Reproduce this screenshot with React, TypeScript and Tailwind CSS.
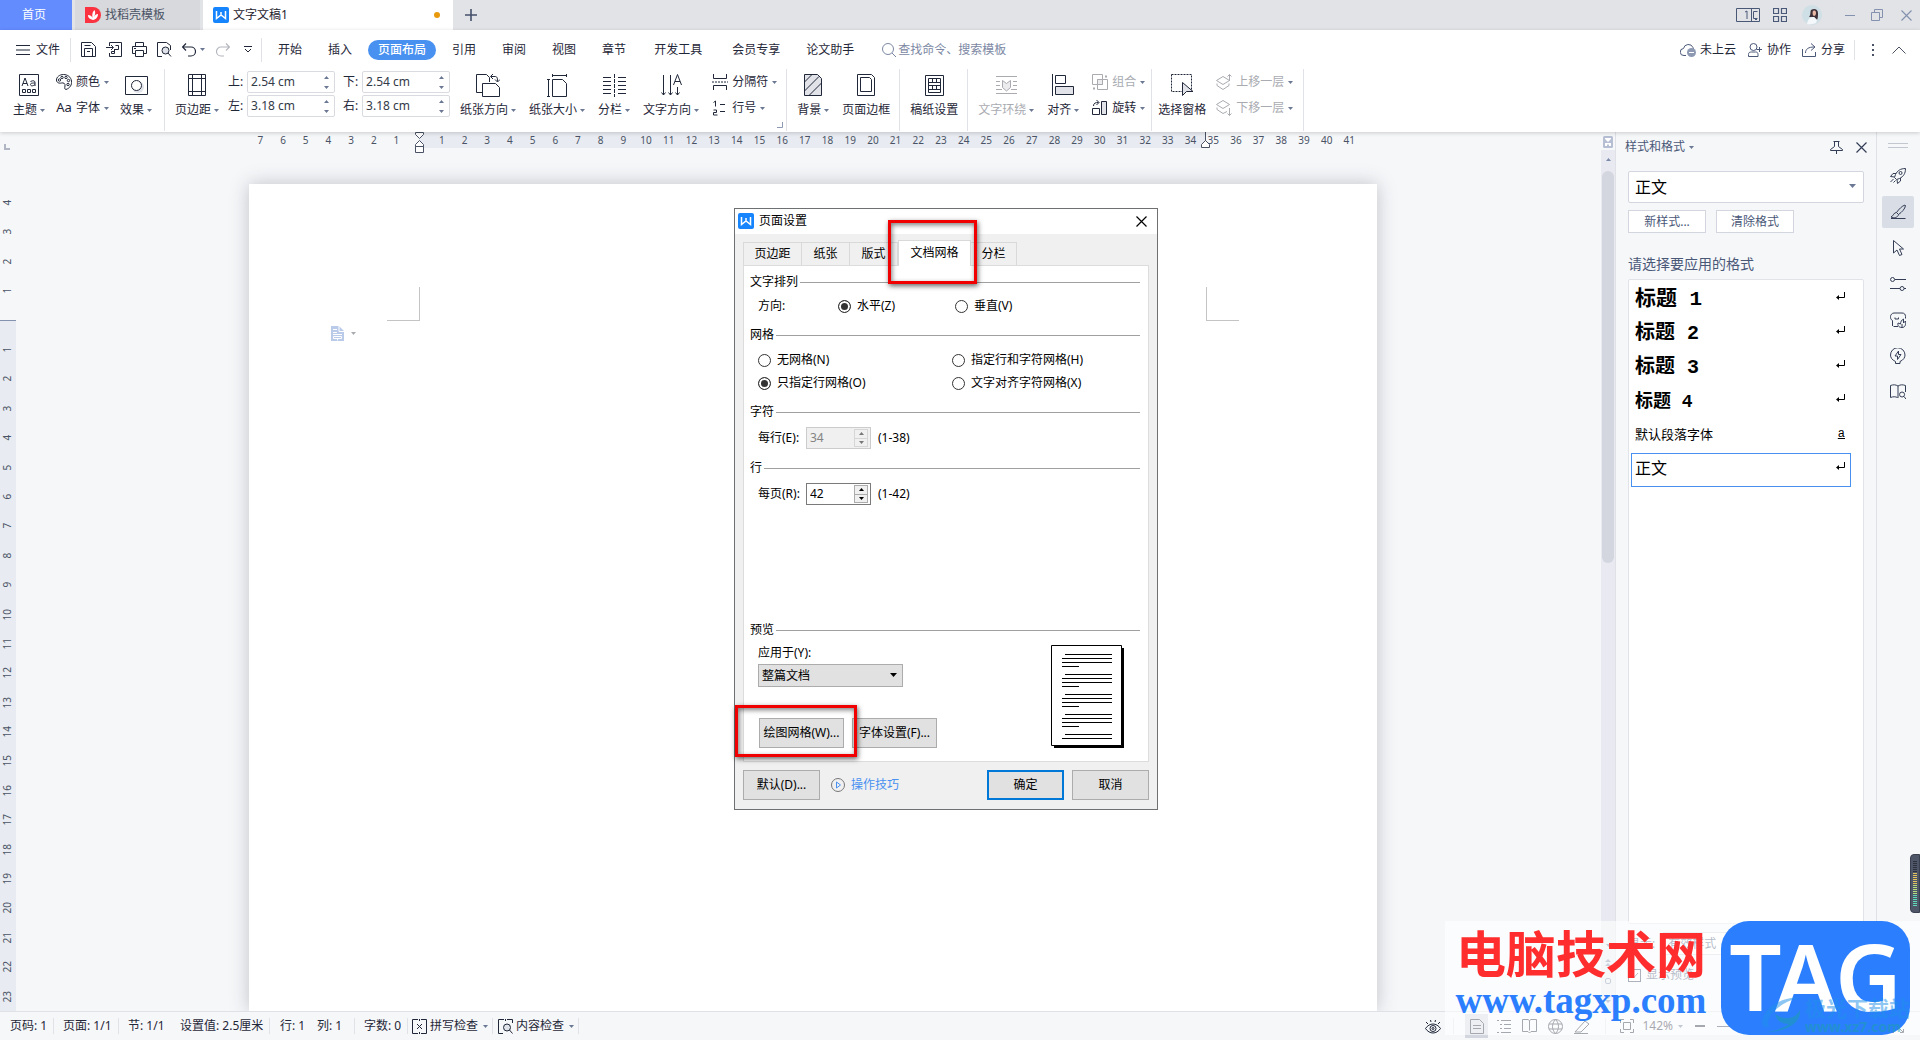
import React, { useState } from 'react';

interface IconProps {
  w: number;
  h: number;
  className?: string;
  children: React.ReactNode;
}

const Icon: React.FC<IconProps> = ({ w, h, className = '', children }) => (
  <svg
    width={w}
    height={h}
    viewBox={`0 0 ${w} ${h}`}
    fill="none"
    stroke="currentColor"
    aria-hidden="true"
    className={`shrink-0 ${className}`}
  >
    {children}
  </svg>
);

const Caret: React.FC<{ className?: string }> = ({ className = 'text-[#6b7894]' }) => (
  <Icon w={5} h={3} className={className}>
    <path d="M0 0h5L2.5 3z" fill="currentColor" stroke="none" />
  </Icon>
);

const CloseIcon: React.FC<{ className?: string }> = ({ className }) => (
  <Icon w={11} h={11} className={className}>
    <path d="M.5.5l10 10M10.5.5l-10 10" strokeWidth="1.2" />
  </Icon>
);

const WriterLogo = () => (
  <Icon w={16} h={16}>
    <rect width="16" height="16" rx="2" fill="#1684fc" stroke="none" />
    <path d="M3.500 4v7.500L8 8l4.500 3.500V4M8 8V5" stroke="#fff" strokeWidth="1.5" />
  </Icon>
);

const Separator: React.FC<{ className?: string }> = ({ className = '' }) => (
  <span className={`w-px shrink-0 bg-[#e0e2e7] ${className}`} />
);

/* ---------- Title bar ---------- */

const TitleBar = () => (
  <header className="flex h-[30px] shrink-0 items-stretch bg-[#e2e3e7]">
    <button className="w-[72px] bg-[#638cff] pr-1 text-white">首页</button>
    <button className="ml-[3px] flex w-[125px] items-center gap-1 bg-[#d8d9dc] pl-[10px] text-[#4a5365]">
      <Icon w={16} h={16}>
        <path d="M0 0h8a8 8 0 0 1 0 16H0z" fill="#fb3340" stroke="none" />
        <path d="M8 13c-4-1-5-3-5-5 2 0 4 1 4.500 3C7 8 7 5 9.500 3c1 2 1 4-.5 7 1-2 2-3 4-3 0 3-2 5.500-5 6z" fill="#fff" stroke="none" />
      </Icon>
      找稻壳模板
    </button>
    <button className="ml-[3px] flex w-[250px] items-center gap-1 bg-white pl-[10px] text-[#1f2430]">
      <WriterLogo />
      文字文稿1
      <span className="mr-[13px] ml-auto size-1.5 rounded-full bg-[#e89a0c]" />
    </button>
    <button aria-label="新建" className="ml-3 text-[#44506a]">
      <Icon w={12} h={12}>
        <path d="M6 0v12M0 6h12" strokeWidth="1.600" />
      </Icon>
    </button>
    <div className="ml-auto flex items-center pr-2 text-[#4a5878]">
      <Icon w={24} h={14}>
        <path d="M.5.5h23v13H.5zM15.500.5v13M9 4l2-1v8" />
        <path d="M21.500 3.500h-4v7h4M19 11.500h2" />
      </Icon>
      <Icon w={14} h={14} className="ml-[13px]">
        <path d="M.5.5h5v5h-5zM8.500.5h5v5h-5zM.5 8.500h5v5h-5zM8.500 8.500h5v5h-5z" strokeWidth="1.200" />
      </Icon>
      <Icon w={20} h={20} className="ml-[15px]">
        <circle cx="10" cy="10" r="10" fill="#cfdfe6" stroke="none" />
        <path d="M9 5c3-2 7-1 7 3 0 3 0 5-1 7l-3-3-5 0c2-2 1-5 2-7z" fill="#40323a" stroke="none" />
        <path d="M11 6c2-1 3 0 3 2s-1 3-2 3-2-3-1-5z" fill="#e9b9a5" stroke="none" />
        <path d="M5 19c1-6 4-7 7-7l3 3-1 3c-3 1.500-7 1.500-9 1z" fill="#f4f8fa" stroke="none" />
      </Icon>
      <Separator className="mr-2 ml-[10px] h-5 bg-[#c3c7d0]" />
      <div className="flex items-center text-[#8492b0]">
        <button aria-label="最小化" className="ml-1">
          <Icon w={10} h={10}><path d="M0 5.500h10" /></Icon>
        </button>
        <button aria-label="还原" className="ml-4">
          <Icon w={12} h={12}><path d="M.5 3.500h8v8h-8zM3.500 3V.5h8v8H9" /></Icon>
        </button>
        <button aria-label="关闭" className="ml-[18px]"><CloseIcon /></button>
      </div>
    </div>
  </header>
);

/* ---------- Menu ---------- */

const menus = [
  { name: '开始' },
  { name: '插入' },
  { name: '页面布局' },
  { name: '引用' },
  { name: '审阅' },
  { name: '视图' },
  { name: '章节' },
  { name: '开发工具', className: 'ml-0.5' },
  { name: '会员专享', className: 'ml-1' },
  { name: '论文助手' },
];

const MenuBar = () => {
  const [active, setActive] = useState('页面布局');

  return (
    <nav className="flex h-[39px] items-center pr-[14px] pl-4 text-[#1f2738]">
      <button className="flex items-center gap-1.5">
        <Icon w={14} h={10}><path d="M0 .5h14M0 5h14M0 9.500h14" /></Icon>
        文件
      </button>
      <Separator className="mx-[10px] h-6" />
      <div className="flex items-center gap-[10px]">
        <button aria-label="保存">
          <Icon w={15} h={15}><path d="M.5 14.500V.5h10l4 4v10zM3.500 14V6.500h8V14M3.500 3.500h6M6 9.500h3" /></Icon>
        </button>
        <button aria-label="输出为PDF">
          <Icon w={16} h={15}><path d="M3.500 4V.5h12v14h-12V11M0 5.500h7M5 3l2.500 2.500L5 8M9.500 3.500h3v4H8.500M8.500 7.500v2h-3v2h3V7" /></Icon>
        </button>
        <button aria-label="打印">
          <Icon w={15} h={15}><path d="M3.500 4V.5h8V4M3 11.500H.5v-7h14v7H12M3.500 8.500h8v6h-8zM2 6.500h2" /></Icon>
        </button>
        <button aria-label="打印预览">
          <Icon w={15} h={15}><path d="M5 14.500H.5V.5h9l4 3V8" /><circle cx="8.500" cy="8.500" r="3.500" fill="#dfe2e8" /><path d="M11 11l3 3.500" /></Icon>
        </button>
        <button aria-label="撤销">
          <Icon w={14} h={14}><path d="M4 .5L.5 4 4 7.500M.5 4H9a4.500 4.500 0 0 1 0 9H6" strokeWidth="1.200" /></Icon>
        </button>
      </div>
      <Caret className="ml-1 text-[#6b7894]" />
      <button aria-label="恢复" className="ml-[11px] text-[#b3b6bd]">
        <Icon w={14} h={14}><path d="M10 .5L13.500 4 10 7.500M13.500 4H5a4.500 4.500 0 0 0 0 9h3" strokeWidth="1.200" /></Icon>
      </button>
      <button aria-label="自定义" className="ml-[14px]">
        <Icon w={8} h={7}><path d="M0 .5h8M1 3l3 3 3-3" /></Icon>
      </button>
      <Separator className="mr-[6px] ml-[9px] h-6" />
      <div className="flex gap-[6px]">
        {menus.map((menu) => (
          <button
            key={menu.name}
            onClick={() => setActive(menu.name)}
            className={`h-5 rounded-full px-[10px] ${menu.className ?? ''} ${
              active === menu.name ? 'bg-[#4891f0] font-medium text-white' : ''
            }`}
          >
            {menu.name}
          </button>
        ))}
      </div>
      <label className="ml-[18px] flex items-center gap-0.5 text-[#7c88a3]">
        <Icon w={14} h={14}><circle cx="6" cy="6" r="5.500" /><path d="M10 10l4 4" /></Icon>
        <input className="w-40 outline-none placeholder:text-[#7c88a3]" placeholder="查找命令、搜索模板" aria-label="查找命令、搜索模板" />
      </label>
      <div className="ml-auto flex items-center">
        <button className="flex items-center gap-1">
          <Icon w={16} h={14} className="text-[#4a5878]">
            <path d="M6 12.500H4a3.500 3.500 0 0 1-.5-7A5 5 0 0 1 13 4.500l.5 1.500" />
            <circle cx="11.500" cy="9.500" r="4.500" fill="#8d99b3" stroke="none" />
            <path d="M9 9.500h5" stroke="#fff" />
          </Icon>
          未上云
        </button>
        <button className="ml-3 flex items-center gap-[5px]">
          <Icon w={14} h={14} className="text-[#4a5878]">
            <circle cx="5.500" cy="4" r="3.500" />
            <path d="M.5 13.500v-2c0-2 1-2.500 3-2.500h4c1.500 0 2.500.5 2.500 2.500v2zM8.500 6.500H14M11.500 4v5" />
          </Icon>
          协作
        </button>
        <button className="ml-[11px] flex items-center gap-[5px]">
          <Icon w={14} h={14} className="text-[#4a5878]">
            <path d="M.5 6v7.500h13V9M3.500 10c0-4 3-6 8.500-6M9 .5L13 4 9 7.500" />
          </Icon>
          分享
        </button>
        <Separator className="mr-[17px] ml-[9px] h-5" />
        <Icon w={3} h={12} className="text-[#4a5365]">
          <path d="M0 1h2M0 6h2M0 11h2" strokeWidth="2" />
        </Icon>
        <button aria-label="折叠功能区" className="ml-[17px]">
          <Icon w={14} h={8} className="text-[#4a5365]"><path d="M.5 7.500L7 1l6.500 6.500" /></Icon>
        </button>
      </div>
    </nav>
  );
};

/* ---------- Ribbon ---------- */

interface ToolProps {
  label: string;
  icon: React.ReactNode;
  caret?: boolean;
  disabled?: boolean;
}

const BigTool: React.FC<ToolProps> = ({ label, icon, caret = true, disabled = false }) => (
  <button disabled={disabled} className="flex shrink-0 flex-col items-center text-[#1f2738] disabled:text-[#a9abb1]">
    <span className="flex h-8 items-center">{icon}</span>
    <span className="mt-px flex items-center gap-[3px] leading-4">
      {label}
      {caret && <Caret />}
    </span>
  </button>
);

const SmallTool: React.FC<ToolProps> = ({ label, icon, disabled = false }) => (
  <button disabled={disabled} className="flex h-5 items-center gap-1 text-[#1f2738] disabled:text-[#a9abb1]">
    {icon}
    {label}
    <Caret />
  </button>
);

const ToolStack: React.FC<{ children: React.ReactNode }> = ({ children }) => (
  <div className="flex shrink-0 flex-col gap-1.5 pt-[3px]">{children}</div>
);

const MarginField: React.FC<{ label: string; value: string }> = ({ label, value }) => (
  <label className="flex items-center text-[#1f2738]">
    <span className="w-[19px]">{label}:</span>
    <span className="flex h-[22px] w-[88px] items-center rounded-xs border border-[#d9dbe0] px-[3px]">
      <input className="w-[71px] text-[#333a48] outline-none" defaultValue={value} />
      <Icon w={5} h={13} className="ml-0.5 text-[#6b7894]">
        <path d="M0 3L2.500 0 5 3zM0 10l2.500 3L5 10z" fill="currentColor" stroke="none" />
      </Icon>
    </span>
  </label>
);

const Ribbon = () => (
  <div className="flex h-[63px] items-start pl-[13px]">
    <div className="flex gap-[11px]">
      <BigTool label="主题" icon={
        <Icon w={20} h={22}>
          <path d="M.5.5h19v21H.5zM3.500 15.500h3v3h-3zM8.500 15.500h3v3h-3zM13.500 15.500h3v3h-3z" />
          <path d="M3 12l3-8 3 8M4 9.500h4M11.500 7.500c3-1.500 4.500-.5 4.500 1V12M16 9c-4 0-4.500.5-4.500 1.500 0 2 3 1.500 4.500 0" />
        </Icon>
      } />
      <ToolStack>
        <SmallTool label="颜色" icon={
          <Icon w={16} h={16}>
            <path d="M10 15.500C14 14 16 11 15.500 7 15 3 11.500.5 7.500.5S.5 3 .5 6s3 3.500 5 3 4 .5 3.500 3-.5 3 1 3.500z" />
            <circle cx="3.500" cy="6" r="1.200" /><circle cx="6" cy="3.500" r="1.200" /><circle cx="10" cy="3.500" r="1.200" />
            <circle cx="12.500" cy="6.500" r="1.200" /><circle cx="12" cy="10.500" r="1.200" />
          </Icon>
        } />
        <SmallTool label="字体" icon={<span className="w-4 text-[13px]">Aa</span>} />
      </ToolStack>
      <BigTool label="效果" icon={
        <Icon w={23} h={19}>
          <circle cx="13" cy="11" r="6" fill="#dfe2e8" stroke="none" />
          <path d="M.5.5h22v18H.5z" /><circle cx="11.500" cy="9.500" r="5" fill="#fff" />
        </Icon>
      } />
    </div>
    <Separator className="mr-[10px] ml-3 h-[62px]" />
    <BigTool label="页边距" icon={
      <Icon w={18} h={22}><path d="M.5.5h17v21H.5zM4.500 0v22M13.500 0v22M0 4.500h18M0 17.500h18" /></Icon>
    } />
    <div className="mt-0.5 mr-[10px] ml-[9px] grid shrink-0 grid-cols-2 gap-x-2 gap-y-0.5">
      <MarginField label="上" value="2.54 cm" />
      <MarginField label="下" value="2.54 cm" />
      <MarginField label="左" value="3.18 cm" />
      <MarginField label="右" value="3.18 cm" />
    </div>
    <div className="flex gap-[13px]">
      <BigTool label="纸张方向" icon={
        <Icon w={24} h={24}>
          <path d="M6 19.500H.5v-18h10l3 3V9M6.500 23.500v-13h13l4 4v9zM15 3.500h4c2 0 2.500 1 2.500 5M17 1l-2.500 2.500L17 6M19 6.500L21.500 9 24 6.500" />
        </Icon>
      } />
      <BigTool label="纸张大小" icon={
        <Icon w={20} h={23}><path d="M5.500 22.500v-17h10l4 4v13zM5 1.500h15M5.500 0v3M19.500 0v3M1.500 5v17M0 5.500h3M0 22.500h3" /></Icon>
      } />
      <BigTool label="分栏" icon={
        <Icon w={23} h={23}>
          <path d="M0 3.500h8M0 7.500h8M0 11.500h8M0 15.500h8M0 19.500h8M15 3.500h8M15 7.500h8M15 11.500h8M15 15.500h8M15 19.500h8" />
          <path d="M11.500 0v23" strokeDasharray="4 1" />
        </Icon>
      } />
      <BigTool label="文字方向" icon={
        <Icon w={21} h={22}>
          <path d="M2.500 1v20M.5 18.500l2 2.500 2-2.500M9.500 1v20M7.500 18.500l2 2.500 2-2.500M16.500 13v8M14.500 18.500l2 2.500 2-2.500M12.500 11l4-10.500L20.500 11M14 7.500h5" />
        </Icon>
      } />
      <ToolStack>
        <SmallTool label="分隔符" icon={
          <Icon w={16} h={16}>
            <path d="M1.500 0v4.500h13V0M1.500 16v-4.500h13V16" /><path d="M0 8h16" strokeDasharray="2 1" />
          </Icon>
        } />
        <SmallTool label="行号" icon={
          <Icon w={16} h={16}><path d="M1.500 2.500L3.500 1v5.500M1.500 10h3v2.500h-3V15h4M8 4.500h5M8 11.500h5" /></Icon>
        } />
      </ToolStack>
    </div>
    <Icon w={6} h={6} className="mb-1 self-end text-[#8d99b3]"><path d="M0 5.500h5.500V0" /></Icon>
    <Separator className="mr-[10px] ml-[3px] h-[62px]" />
    <div className="flex gap-[13px]">
      <BigTool label="背景" icon={
        <Icon w={18} h={22}>
          <path d="M.5.5h13l4 4v17H.5z" fill="#e1e3e9" /><path d="M.5 8L8 .5M.5 17L15 2.500M5 21.500L17.500 9" />
        </Icon>
      } />
      <BigTool label="页面边框" caret={false} icon={
        <Icon w={18} h={22}><path d="M.5.5h14l3 3v18H.5zM3.500 3.500h9l2 2v12h-11z" /></Icon>
      } />
    </div>
    <Separator className="mr-[10px] ml-[9px] h-[62px]" />
    <BigTool label="稿纸设置" caret={false} icon={
      <Icon w={19} h={21}><path d="M.5.500h18v20H.5zM3.500 3.500h12v14h-12zM4 7.500h11M4 10.500h11M4 14.500h11M7.500 4v3.500M11.500 4v3.500M7.500 10.500v4M11.500 10.500v4" /></Icon>
    } />
    <Separator className="mr-[10px] ml-[9px] h-[62px]" />
    <div className="flex gap-[13px]">
      <BigTool label="文字环绕" disabled icon={
        <Icon w={21} h={18}>
          <path d="M0 .5h21M0 17.500h21M0 5.500h4M0 9.500h4M0 13.500h6M17 5.500h4M17 9.500h4M15 13.500h6" />
          <path d="M6.500 4.500l4 3 4-3v7l-4 3.500-4-3.500z" fill="#ececef" />
        </Icon>
      } />
      <BigTool label="对齐" icon={
        <Icon w={22} h={22}><path d="M.5 0v22M3.500 1.500h10v8h-10z" /><path d="M3.500 12.500h18v8h-18z" fill="#e1e3e9" /></Icon>
      } />
      <ToolStack>
        <SmallTool label="组合" disabled icon={
          <Icon w={16} h={16}><path d="M.5.5h10v10H.5zM5.500 5.500h10v10h-10z" /><path d="M5.500 5.500h5v5h-5z" fill="#ececef" /><path d="M13 2.500h2M1 14.500h2" strokeWidth="2" /></Icon>
        } />
        <SmallTool label="旋转" icon={
          <Icon w={16} h={16}><path d="M9.500 1.500h5v13h-5z" fill="#e1e3e9" /><path d="M7.500 8.500h-7v6h7zM1.500 6c0-3 2-3.500 5-3.500M4.500 0L7 2.500 4.500 5" /></Icon>
        } />
      </ToolStack>
    </div>
    <Separator className="mx-[6px] h-[62px]" />
    <div className="flex gap-[10px]">
      <BigTool label="选择窗格" caret={false} icon={
        <Icon w={23} h={23}>
          <path d="M.5.500h20v17H.5z" strokeDasharray="2 1" /><path d="M11.500 8.500v13l4-4h6.500z" fill="#e1e3e9" />
        </Icon>
      } />
      <ToolStack>
        <SmallTool label="上移一层" disabled icon={
          <Icon w={16} h={16}><path d="M.5 6.500l6.500-4 6.500 4-6.500 4zM1 9.500v2l6 4 6-4v-2M13.500 7V.5M11.500 2.500l2-2 2 2" /></Icon>
        } />
        <SmallTool label="下移一层" disabled icon={
          <Icon w={16} h={16}><path d="M.5 4.500l6.500-4 6.500 4-6.500 4zM1 7.500v2l6 4 4-2M13.500 8v7.500M11.500 13.500l2 2 2-2" /></Icon>
        } />
      </ToolStack>
    </div>
    <Separator className="mx-[10px] h-[62px]" />
  </div>
);

/* ---------- Document ---------- */

const columnMarks = Array.from({ length: 49 }, (_, i) => Math.abs(i - 7));
const rowMarks = Array.from({ length: 28 }, (_, i) => Math.abs(i - 4));

const RowRuler = () => (
  <div className="relative flex w-4 shrink-0 flex-col text-[10px] text-[#4a5365]">
    <Icon w={6} h={6} className="mt-3 mb-[38px] ml-1 text-[#b1b6c4]"><path d="M1 0v5h5" strokeWidth="2" /></Icon>
    <div className="absolute inset-x-0 top-[188px] bottom-0 border-t border-[#8492b0] bg-[#e8ebf1]" />
    <div className="relative flex h-[826px] flex-col">
      {rowMarks.map((mark, i) => (
        <span key={i} className="flex flex-1 items-center justify-center">
          <span className="-rotate-90">{mark || ''}</span>
        </span>
      ))}
    </div>
  </div>
);

const ColumnRuler = () => (
  <div className="relative h-4 w-[1128px] shrink-0 text-[10px] leading-4 text-[#4a5365]">
    <div className="absolute inset-y-0 left-[170px] w-[786px] bg-[#e8ebf1]" />
    <div className="relative flex w-[1112px]">
      {columnMarks.map((mark, i) => (
        <span key={i} className="flex-1 text-center">{mark || ''}</span>
      ))}
    </div>
    <Icon w={9} h={22} className="absolute top-0 left-[166px]">
      <path d="M.5.5h8v2l-4 4-4-4zM.5 14.500v-2l4-4 4 4v2zM.5 14.500h8v6h-8z" fill="#fff" />
    </Icon>
    <Icon w={9} h={16} className="absolute top-0 left-[952px]">
      <path d="M4.500 0v9M.5 15.500v-3l4-4 4 4v3z" fill="#fff" />
    </Icon>
  </div>
);

const Editor = () => (
  <main className="flex min-w-0 flex-1 overflow-hidden bg-[#f6f7f9]">
    <RowRuler />
    <div className="flex min-w-0 flex-1 flex-col items-center overflow-hidden pl-[9px]">
      <ColumnRuler />
      <article className="mt-9 w-[1128px] flex-1 bg-white pt-[103px] shadow-[0_0_18px_rgba(40,45,60,0.26)]">
        <div className="flex justify-between px-[138px]">
          <span className="h-[34px] w-[33px] border-r border-b border-[#c4c4c4]" />
          <span className="h-[34px] w-[33px] border-b border-l border-[#c4c4c4]" />
        </div>
        <button aria-label="粘贴选项" className="mt-[5px] ml-[82px] flex items-center gap-[7px]">
          <Icon w={13} h={15}>
            <path d="M0 0h8l5 5v10H0z" fill="#b9cbe9" stroke="none" />
            <path d="M8 0v5.500h5M2 3.500h4M2 6.500h4M2 8.500h9M2.500 10.500h8v2h-8zM6.500 12.500v2" stroke="#fff" />
          </Icon>
          <Caret className="text-[#a9abb1]" />
        </button>
      </article>
    </div>
    <div className="flex w-[14px] shrink-0 flex-col items-center">
      <Icon w={10} h={12} className="mt-1 mb-0.5">
        <rect width="10" height="12" rx="1.500" fill="#b5bed3" stroke="none" />
        <path d="M2 2h6v1L5 6 2 3zM2 7h6v3H6V8.500H4V10H2z" fill="#fff" stroke="none" />
      </Icon>
      <div className="flex w-full flex-1 flex-col items-center bg-[#e9eaf1] pt-2">
        <Icon w={5} h={3} className="text-[#7d8bab]"><path d="M0 3h5L2.500 0z" fill="currentColor" stroke="none" /></Icon>
        <span className="mt-[10px] h-[392px] w-3 rounded-full bg-[#d3d6df]" />
        <div className="mt-auto mb-2 flex flex-col items-center gap-3 text-[#7d8bab]">
          <Caret />
          <Icon w={6} h={7}><path d="M0 3h6L3 0zM0 7h6L3 4z" fill="currentColor" stroke="none" /></Icon>
          <Icon w={6} h={6}><rect x=".5" y=".5" width="5" height="5" rx="1.500" /></Icon>
          <Icon w={6} h={7}><path d="M0 0h6L3 3zM0 4h6L3 7z" fill="currentColor" stroke="none" /></Icon>
        </div>
      </div>
    </div>
  </main>
);

/* ---------- Styles panel ---------- */

const styleRows = [
  { name: '标题 1', className: 'text-[21px] font-semibold', mark: '↵' },
  { name: '标题 2', className: 'text-[20px] font-bold', mark: '↵' },
  { name: '标题 3', className: 'text-[20px] font-semibold', mark: '↵' },
  { name: '标题 4', className: 'text-[18px] font-bold', mark: '↵' },
  { name: '默认段落字体', className: 'text-[13px]', mark: 'a' },
  { name: '正文', className: 'text-base', mark: '↵' },
];

const StylesPanel = () => {
  const [selected, setSelected] = useState('正文');

  return (
    <aside className="flex w-[262px] shrink-0 flex-col border-x border-[#dfe1e7] bg-[#f6f7f9] px-3 text-[#4a5878]">
      <div className="-mx-[3px] flex h-[30px] items-center">
        <h2>样式和格式</h2>
        <Caret className="ml-1 text-[#6b7894]" />
        <button aria-label="固定" className="ml-auto text-[#333d55]">
          <Icon w={13} h={13}><path d="M3.500.500h6M4.500.500v5l-4 3v1h12v-1l-4-3v-5M6.500 10v3" /></Icon>
        </button>
        <button aria-label="关闭面板" className="ml-[13px] text-[#333d55]"><CloseIcon /></button>
      </div>
      <div className="relative mt-[9px]">
        <select aria-label="当前样式" className="h-8 w-full appearance-none rounded-xs border border-[#d3d6de] bg-white pl-1.5 text-base text-black">
          <option>正文</option>
        </select>
        <Icon w={7} h={4} className="pointer-events-none absolute top-[13px] right-2 text-[#6b7894]"><path d="M0 0h7L3.500 4z" fill="currentColor" stroke="none" /></Icon>
      </div>
      <div className="mt-[7px] flex gap-[10px]">
        <button className="h-[23px] w-[78px] border border-[#d3d6de] bg-white">新样式...</button>
        <button className="h-[23px] w-[78px] border border-[#d3d6de] bg-white">清除格式</button>
      </div>
      <h3 className="mt-[21px] mb-[5px] text-sm">请选择要应用的格式</h3>
      <ul className="flex-1 rounded-xs border border-[#e1e3e9] bg-white py-[3px] pr-3 pl-0.5 font-['Liberation_Mono','Noto_Sans_CJK_SC',monospace] text-black">
        {styleRows.map((row) => (
          <li key={row.name}>
            <button
              onClick={() => setSelected(row.name)}
              className={`flex h-[34px] w-full items-center justify-between border pr-[5px] pl-[3px] ${
                selected === row.name ? 'border-[#4891f0]' : 'border-transparent'
              }`}
            >
              <span className={row.className}>{row.name}</span>
              {row.mark === 'a' ? (
                <span className="mb-1 text-xs underline">a</span>
              ) : (
                <Icon w={9} h={9} className="mb-2"><path d="M8.500 0v5.500H2" /><path d="M0 5.500L3 3v5z" fill="currentColor" stroke="none" /></Icon>
              )}
            </button>
          </li>
        ))}
      </ul>
      <label className="relative mt-2 flex h-[23px] items-center">
        显示:
        <select className="ml-2 h-full flex-1 appearance-none border border-[#d3d6de] bg-white pl-1">
          <option>有效样式</option>
        </select>
        <Caret className="pointer-events-none absolute right-2 text-[#6b7894]" />
      </label>
      <div className="mt-3 mb-[28px] flex items-center">
        <label className="flex items-center gap-[5px]">
          <span className="relative flex">
            <input type="checkbox" defaultChecked className="peer size-[13px] appearance-none border border-[#333d55] bg-white" />
            <Icon w={13} h={13} className="pointer-events-none absolute inset-0 hidden peer-checked:block"><path d="M3 6.500L5.500 9 10 4" /></Icon>
          </span>
          显示预览
        </label>
        <button className="mr-1 ml-auto flex items-center gap-1 text-[#4891f0]">
          <Icon w={13} h={13} className="text-[#f0a43a]"><path d="M3.500.5h6l3 3v6l-6 3-6-3v-6zM9 4H5v2.500h3.500V9H4.500" /></Icon>
          智能排版
        </button>
      </div>
    </aside>
  );
};

const railTools = [
  { name: '助手', path: 'M15.500.5c-5 0-8 2-10 6l-1 3 2 2 3-1c4-2 6-5 6-10zM6 5.500H3l-2.500 3 4 .5M10.500 10v3l-3 2.500-.5-4M10.500 3.500a1.500 1.500 0 1 0 .1 3a1.500 1.500 0 1 0-.1-3M3.500 11l-3 3M5.500 12.500l-2 2' },
  { name: '样式', path: 'M15 1c-3 1-6 4-8.500 7.500l2 2C12 8 15 5 15.500 1.500zM6.500 8.500c-3 0-2.500 3-5.500 4.500 3 1.500 7 .5 7.500-2.500M1 14.500h14.500' },
  { name: '选择', path: 'M3.500.5v12.500l3.500-3 2.500 5.500 2.500-1-2.500-5.500h4z' },
  { name: '设置', path: 'M5 3.500h11M0 12.500h10M14 12.500h2M2.500 1.500a2 2 0 1 0 .1 4a2 2 0 1 0-.1-4M12 10.500a2 2 0 1 0 .1 4a2 2 0 1 0-.1-4' },
  { name: '素材', path: 'M3.500 14.500H8M2.500 14V8.500C.5 7.500.5 6 .5 4.500S2 1 4 1h8c2.500 0 3.500 1.500 3.500 3.500v2M5 5.500v1.500h3.500V5.500M12 15.500c-4 0-4.500-3-4-4.500l2.500 1c0-2 1-4 3-5v4l2-2c.5 3 0 6.500-3.500 6.500zM12 15v-3' },
  { name: '灵感', path: 'M5.500 13.500C2 12 .5 9.500.5 7a7 7 0 0 1 14.500 0c0 2.500-1.500 5-5 6.500v2H5.500zM8.500 3l-3.500 5h2.500v3.500L11 6.500H8.500z' },
  { name: '阅读', path: 'M7.500 13.500C5.500 12.500 3 12.500.5 13.500v-12c3-1 5-1 7.500.5 2.500-1.500 4.500-1.500 7.500-.500V8M8 2v12M12 8a2.500 2.500 0 1 0 .1 5a2.500 2.500 0 1 0-.1-5M14 12.500l2 2.500' },
];

const ToolRail = () => (
  <aside className="flex w-[43px] shrink-0 flex-col items-center gap-1 bg-[#f6f7f9] pt-[11px] pr-0.5 text-[#333d55]">
    <Icon w={20} h={5} className="mb-[8px] text-[#c3c7d0]"><path d="M0 .5h20M0 4.500h20" /></Icon>
    {railTools.map((tool) => (
      <button
        key={tool.name}
        aria-label={tool.name}
        className={`flex size-8 items-center justify-center rounded-xs ${tool.name === '样式' ? 'bg-[#d9dde5]' : ''}`}
      >
        <Icon w={16} h={16}><path d={tool.path} /></Icon>
      </button>
    ))}
    <Icon w={16} h={4} className="mt-auto mb-4"><path d="M2 .5a1.500 1.500 0 1 0 .1 3a1.500 1.500 0 1 0-.1-3M8 .5a1.500 1.500 0 1 0 .1 3a1.500 1.500 0 1 0-.1-3M14 .5a1.500 1.500 0 1 0 .1 3a1.500 1.500 0 1 0-.1-3" /></Icon>
  </aside>
);

/* ---------- Status bar ---------- */

const StatusBar = () => (
  <footer className="flex h-[29px] shrink-0 items-center border-t border-[#dfe1e7] bg-[#f6f7f9] pr-4 pl-[10px] text-[#1f2738]">
    <span className="w-[43px]">页码: 1</span>
    <Separator className="mr-[9px] h-4" />
    <span className="w-[55px]">页面: 1/1</span>
    <Separator className="mr-[9px] h-4" />
    <span className="w-[52px]">节: 1/1</span>
    <span className="w-[89px]">设置值: 2.5厘米</span>
    <Separator className="mr-[10px] h-4" />
    <span className="w-[37px]">行: 1</span>
    <span className="w-[37px]">列: 1</span>
    <Separator className="mr-[9px] h-4" />
    <span className="w-[43px]">字数: 0</span>
    <Separator className="mr-1 h-4" />
    <button className="flex items-center gap-[3px]">
      <Icon w={15} h={15}><path d="M6 .5H.5v14H6M9 .5h5.500v14H9M7.500 0v2M7.500 13v2M5 5l5 5M10 5l-5 5" /></Icon>
      拼写检查
      <Caret className="ml-0.5 text-[#6b7894]" />
    </button>
    <Separator className="mr-[5px] ml-1 h-4" />
    <button className="flex items-center gap-[3px]">
      <Icon w={15} h={15}><path d="M5 14.500H.5V.5H6M9 .5h5.500V4M7.500 0v2" /><circle cx="9" cy="8.500" r="3.500" fill="#dfe2e8" /><path d="M11.500 11l3 3.500" /></Icon>
      内容检查
      <Caret className="ml-0.5 text-[#6b7894]" />
    </button>
    <Separator className="ml-1 h-4" />

    <div className="ml-auto flex items-center">
      <button aria-label="护眼模式">
        <Icon w={16} h={15}><path d="M.5 9.500c4-6 11-6 15 0-4 6-11 6-15 0zM1 3l2 2M15 3l-2 2M5.500 1l.5 2M10.500 1L10 3" /><circle cx="8" cy="9.500" r="3" /><circle cx="8" cy="9.500" r="1" /></Icon>
      </button>
      <Separator className="mr-[11px] ml-3 h-4" />
      <button aria-label="页面视图" className="flex h-6 w-[23px] items-center justify-center bg-[#d3d6df]">
        <Icon w={14} h={15}><path d="M.5.5h9l4 4v10H.5zM3 6.500h8M3 9.500h8" /></Icon>
      </button>
      <div className="ml-[9px] flex items-center gap-[11px]">
        <button aria-label="大纲"><Icon w={14} h={13}><path d="M0 .5h2M4 .5h10M3 4.500h2M7 4.500h7M3 8.500h2M7 8.500h7M0 12.500h2M4 12.500h10" /></Icon></button>
        <button aria-label="阅读版式"><Icon w={15} h={15}><path d="M.5.5H6l1.500 1L9 .5h5.500v12H9L7.500 14 6 12.500H.5zM7.500 1.500v10" /></Icon></button>
        <button aria-label="Web版式"><Icon w={15} h={15}><circle cx="7.500" cy="7.500" r="7" /><path d="M1 5h13M1 10h13M7.500.5c-4 4-4 10 0 14 4-4 4-10 0-14z" /></Icon></button>
        <button aria-label="写作模式"><Icon w={17} h={15}><path d="M1 13L11 2l4 3-8 8zM0 14.500h14" /></Icon></button>
      </div>
      <Separator className="mx-[14px] h-4" />
      <button aria-label="最佳显示比例"><Icon w={14} h={14}><path d="M.5 4V.5H4M10 .5h3.500V4M.5 10v3.500H4M13.500 10v3.500H10M3.500 3.500h7v7h-7z" /></Icon></button>
      <button className="ml-2 flex items-center gap-[5px]">142% <Caret /></button>
      <button aria-label="缩小" className="ml-3"><Icon w={10} h={2}><path d="M0 1h10" strokeWidth="2" /></Icon></button>
      <input
        type="range"
        aria-label="显示比例"
        defaultValue={52}
        className="mr-2 ml-3 h-3 w-[142px] appearance-none bg-[linear-gradient(#333d55,#333d55)] bg-[length:100%_1px] bg-center bg-no-repeat [&::-webkit-slider-thumb]:size-3 [&::-webkit-slider-thumb]:appearance-none [&::-webkit-slider-thumb]:rounded-full [&::-webkit-slider-thumb]:border [&::-webkit-slider-thumb]:border-[#333d55] [&::-webkit-slider-thumb]:bg-white"
      />
      <button aria-label="放大"><Icon w={10} h={10}><path d="M5 0v10M0 5h10" strokeWidth="1.500" /></Icon></button>
      <button aria-label="全屏" className="ml-[13px]"><Icon w={14} h={14}><path d="M.5 4V.5H4M10 .5h3.500V4M.5 10v3.500H4M13.500 10v3.500H10M1 1l4 4M13 1L9 5M1 13l4-4M13 13L9 9" /></Icon></button>
    </div>
  </footer>
);

/* ---------- Page setup dialog ---------- */

const dialogTabs = [
  { name: '页边距', className: 'w-[59px]' },
  { name: '纸张', className: 'w-12' },
  { name: '版式', className: 'w-12' },
  { name: '文档网格', className: 'w-[73px]' },
  { name: '分栏', className: 'w-[46px]' },
];

const SectionTitle: React.FC<{ children: React.ReactNode }> = ({ children }) => (
  <h3 className="flex items-center gap-0.5 pr-0.5 leading-4">
    {children}
    <span className="h-px flex-1 bg-[#a0a0a0]" />
  </h3>
);

const Radio: React.FC<{ name: string; label: string; checked?: boolean }> = ({ name, label, checked = false }) => (
  <label className="flex h-4 items-center gap-1.5">
    <input
      type="radio"
      name={name}
      defaultChecked={checked}
      className="size-[13px] appearance-none rounded-full border border-[#333] bg-white checked:bg-[#333] checked:shadow-[inset_0_0_0_2px_#fff]"
    />
    {label}
  </label>
);

interface SpinProps {
  label: string;
  value: number;
  range: string;
  disabled?: boolean;
}

const SpinField: React.FC<SpinProps> = ({ label, value, range, disabled = false }) => (
  <div className="flex h-[22px] items-center pl-2">
    <label className="flex items-center">
      <span className="w-12">{label}:</span>
      <span className={`flex h-[22px] w-[65px] items-center border pr-0.5 pl-[3px] ${disabled ? 'border-[#ccc] bg-[#f0f0f0]' : 'border-[#7a7a7a] bg-white'}`}>
        <input disabled={disabled} defaultValue={value} className="w-11 outline-none disabled:text-[#838383]" />
        <span className={`flex h-[18px] w-[14px] flex-col border bg-[#f0f0f0] ${disabled ? 'border-[#d6d6d6] text-[#777]' : 'border-[#acacac] text-black'}`}>
          <span className="flex flex-1 items-center justify-center border-b border-inherit">
            <Icon w={5} h={3}><path d="M0 3h5L2.500 0z" fill="currentColor" stroke="none" /></Icon>
          </span>
          <span className="flex flex-1 items-center justify-center">
            <Caret className="" />
          </span>
        </span>
      </span>
    </label>
    <span className="ml-[7px]">{range}</span>
  </div>
);

const DialogButton: React.FC<{ className: string; children: React.ReactNode }> = ({ className, children }) => (
  <button className={`h-[30px] bg-[#e1e1e1] ${className}`}>{children}</button>
);

const previewLines = [0, 20, 40, 60];

const PagePreview = () => (
  <Icon w={73} h={103} className="mr-[18px]">
    <path d="M3 3h70v100H3z" fill="#000" stroke="none" />
    <path d="M.5.5h70v100H.5z" fill="#fff" />
    {previewLines.map((y) => (
      <path key={y} d={`M14 ${y + 9.5}h47M11 ${y + 13.5}h50M11 ${y + 17.5}h50M11 ${y + 21.5}h17`} />
    ))}
    <path d="M14 89.500h47M11 93.500h50" />
  </Icon>
);

const PageSetupDialog = () => {
  const [tab, setTab] = useState('文档网格');

  return (
    <div
      role="dialog"
      aria-label="页面设置"
      className="absolute top-[208px] left-[734px] flex h-[602px] w-[424px] flex-col border border-[#6f7072] bg-[#f0f0f0] text-black"
    >
      <div className="flex h-[25px] shrink-0 items-center gap-[5px] bg-white pr-[10px] pb-px pl-[3px]">
        <WriterLogo />
        页面设置
        <button aria-label="关闭" className="ml-auto"><CloseIcon /></button>
      </div>
      <div className="flex h-[31px] shrink-0 items-end px-2">
        {dialogTabs.map((t) => (
          <button
            key={t.name}
            onClick={() => setTab(t.name)}
            className={`${t.className} ${
              tab === t.name
                ? 'relative z-10 -mb-px h-[26px] border-x border-t border-[#d9d9d9] bg-white pb-px'
                : 'h-[23px] border-t border-r border-[#d9d9d9] first:border-l'
            }`}
          >
            {t.name}
          </button>
        ))}
      </div>
      <div className="mx-2 flex flex-1 flex-col border border-[#dcdcdc] bg-white px-1.5 pt-2 pb-[13px]">
        <SectionTitle>文字排列</SectionTitle>
        <div className="mt-2 flex pl-2">
          <span className="w-20 leading-4">方向:</span>
          <div className="w-[117px]"><Radio name="direction" label="水平(Z)" checked /></div>
          <Radio name="direction" label="垂直(V)" />
        </div>
        <div className="mt-[13px]"><SectionTitle>网格</SectionTitle></div>
        <div className="mt-[9px] grid grid-cols-[194px_1fr] gap-y-[7px] pl-2">
          <Radio name="grid" label="无网格(N)" />
          <Radio name="grid" label="指定行和字符网格(H)" />
          <Radio name="grid" label="只指定行网格(O)" checked />
          <Radio name="grid" label="文字对齐字符网格(X)" />
        </div>
        <div className="mt-[13px] mb-[7px]"><SectionTitle>字符</SectionTitle></div>
        <SpinField label="每行(E)" value={34} range="(1-38)" disabled />
        <div className="mt-[11px] mb-[7px]"><SectionTitle>行</SectionTitle></div>
        <SpinField label="每页(R)" value={42} range="(1-42)" />
        <div className="mt-auto"><SectionTitle>预览</SectionTitle></div>
        <div className="mt-[7px] flex justify-between pl-2">
          <div>
            <label htmlFor="apply-to" className="block leading-4">应用于(Y):</label>
            <div className="relative mt-[3px] w-[145px]">
              <select id="apply-to" className="block h-[23px] w-full appearance-none border border-[#acacac] bg-[#e1e1e1] pl-[3px]">
                <option>整篇文档</option>
              </select>
              <Icon w={7} h={4} className="pointer-events-none absolute top-[9px] right-[6px]"><path d="M0 0h7L3.500 4z" fill="currentColor" stroke="none" /></Icon>
            </div>
            <div className="mt-[31px] flex gap-2 pl-px">
              <DialogButton className="w-[85px] border border-[#acacac]">绘图网格(W)...</DialogButton>
              <DialogButton className="w-[85px] border border-[#acacac]">字体设置(F)...</DialogButton>
            </div>
          </div>
          <PagePreview />
        </div>
      </div>
      <div className="flex h-[47px] shrink-0 items-center px-2 pb-0.5">
        <DialogButton className="w-[77px] border border-[#acacac]">默认(D)...</DialogButton>
        <a href="#tips" className="ml-[11px] flex items-center gap-1.5 text-[#4891f0]">
          <Icon w={14} h={14}><circle cx="7" cy="7" r="6.500" stroke="#777" /><path d="M5.500 4v6L9.500 7z" /></Icon>
          操作技巧
        </a>
        <DialogButton className="mr-2 ml-auto w-[77px] border-2 border-[#0078d7]">确定</DialogButton>
        <DialogButton className="w-[77px] border border-[#acacac]">取消</DialogButton>
      </div>

      {/* Highlight frames */}
      <span className="pointer-events-none absolute top-[11px] left-[153px] z-20 h-16 w-[89px] border-[3px] border-[#f00000] shadow-[1px_2px_5px_rgba(0,0,0,0.6),inset_1px_2px_5px_rgba(0,0,0,0.5)]" />
      <span className="pointer-events-none absolute top-[496px] left-0 z-20 h-[52px] w-[122px] border-[3px] border-[#f00000] shadow-[1px_2px_5px_rgba(0,0,0,0.6),inset_1px_2px_5px_rgba(0,0,0,0.5)]" />
    </div>
  );
};

/* ---------- Overlays ---------- */

const meterBars = Array.from({ length: 23 }, (_, i) => i);

const LevelMeter = () => (
  <div className="absolute top-[854px] right-0 flex h-[59px] w-[10px] flex-col items-center gap-px rounded-l-sm border border-[#3a4050] bg-[#4f5668] pt-1.5">
    {meterBars.map((i) => (
      <span
        key={i}
        className={`h-px w-1 ${i < 6 ? 'bg-[#2c313d]' : i < 12 ? 'bg-[#e3c35c]' : i < 17 ? 'bg-[#b7dd7c]' : 'bg-[#5fd9b6]'}`}
      />
    ))}
  </div>
);

const SiteBanner = () => (
  <div className="pointer-events-none absolute right-0 bottom-[5px] flex h-[114px] w-[475px] items-stretch justify-end bg-white/60 pr-[10px]">
    <div className="flex flex-1 flex-col items-center pr-1">
      <p className="mt-1 font-['Noto_Sans_CJK_SC',sans-serif] text-[50px] leading-[52px] font-bold text-[#ff2d2d]">电脑技术网</p>
      <p className="mt-1 font-['Liberation_Serif',serif] text-[37px] leading-10 font-bold text-[#2b7fff]">www.tagxp.com</p>
    </div>
    <div className="relative flex w-[189px] items-center justify-center rounded-[28px] bg-[#2b7fff] pb-1 font-['Noto_Sans',sans-serif] text-[92px] leading-none font-semibold text-white">
      TAG
      <div className="absolute right-0 bottom-0 flex items-center gap-1 text-[#1f8fe8] opacity-50">
        <Icon w={40} h={38}>
          <path d="M38 2C22 0 2 12 1 26c0 4 3 6 7 5C3 22 18 6 38 2z" fill="currentColor" stroke="none" />
          <path d="M6 36c18 0 34-8 33-22C34 24 22 24 14 18c2 8 8 10 14 10-6 4-14 7-22 8z" fill="#1ba0a8" stroke="none" />
        </Icon>
        <div>
          <p className="font-['Noto_Sans_CJK_SC',sans-serif] text-[21px] leading-6 font-bold">极光下载站</p>
          <p className="text-[14px] leading-4 font-bold text-[#1ba0a8]">www.xz7.com</p>
        </div>
      </div>
    </div>
  </div>
);

export default function App() {
  return (
    <div className="relative flex h-screen flex-col overflow-hidden bg-[#f6f7f9] font-['Noto_Sans','Noto_Sans_CJK_SC',sans-serif] text-xs">
      <TitleBar />
      <div className="z-10 h-[102px] shrink-0 bg-white shadow-[0_1px_4px_rgba(0,0,0,0.18)]">
        <MenuBar />
        <Ribbon />
      </div>
      <div className="flex min-h-0 flex-1">
        <Editor />
        <StylesPanel />
        <ToolRail />
      </div>
      <StatusBar />
      <PageSetupDialog />
      <LevelMeter />
      <SiteBanner />
    </div>
  );
}
